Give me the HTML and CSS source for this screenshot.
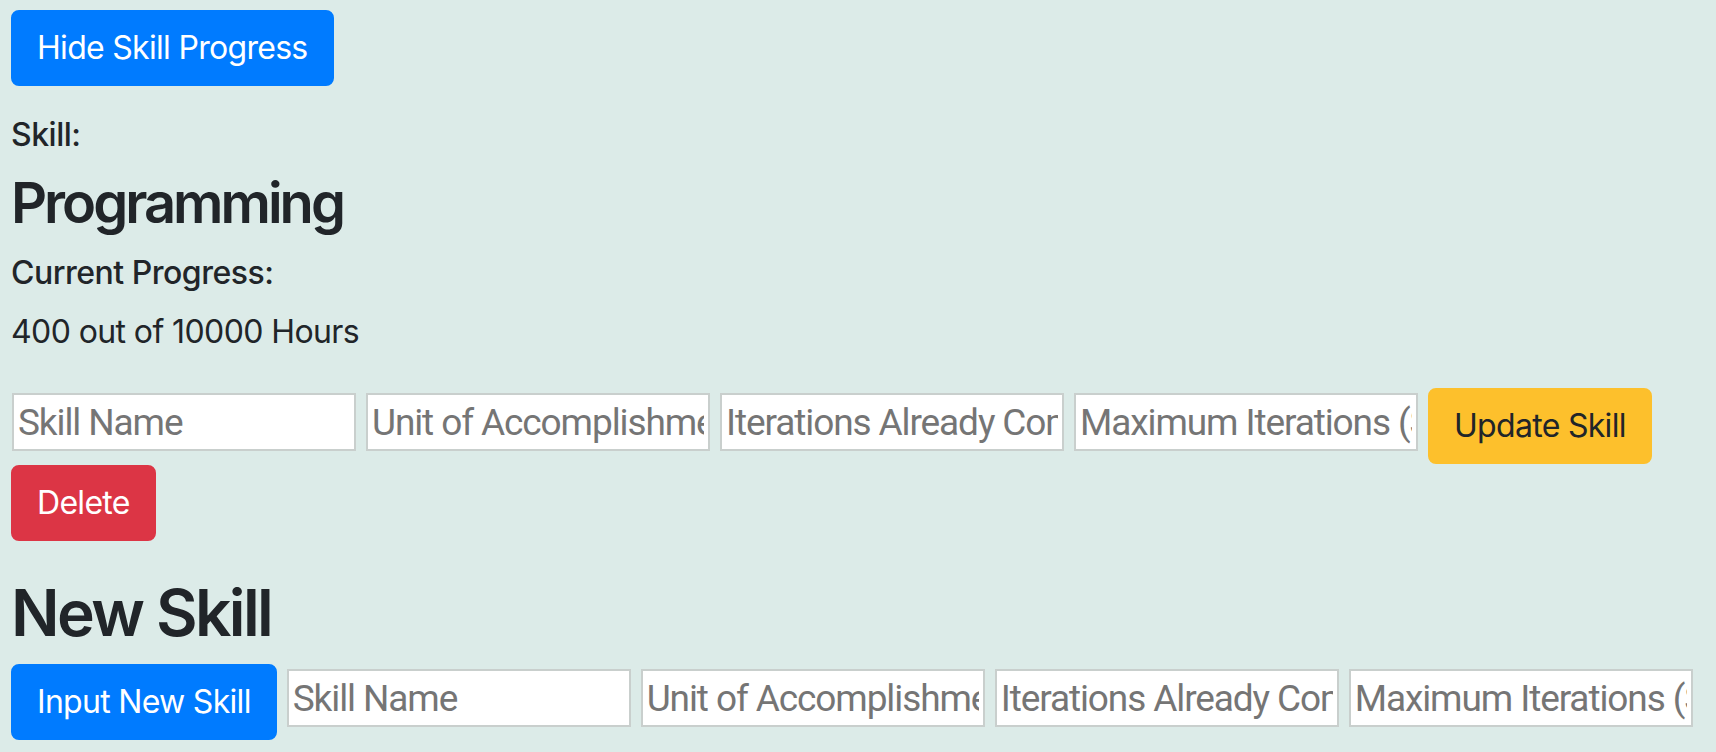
FILE: index.html
```html
<!DOCTYPE html>
<html lang="en">
<head>
<meta charset="utf-8">
<title>Skill Tracker</title>
<link rel="stylesheet" href="styles.css">
</head>
<body>
<div class="app">
  <button class="btn btn-primary hide-btn" type="button">Hide Skill Progress</button>
  <div class="skill">
    <h6 class="label">Skill:</h6>
    <h3 class="skill-name">Programming</h3>
    <h6 class="label">Current Progress:</h6>
    <p class="progress-text">400 out of 10000 Hours</p>
    <div class="form-row edit-row">
      <input class="field" type="text" placeholder="Skill Name">
      <input class="field" type="text" placeholder="Unit of Accomplishment">
      <input class="field" type="text" placeholder="Iterations Already Completed">
      <input class="field" type="text" placeholder="Maximum Iterations (Skill Goal)">
      <button class="btn btn-warning" type="button">Update Skill</button>
      <button class="btn btn-danger" type="button">Delete</button>
    </div>
  </div>
  <h2 class="section-title">New Skill</h2>
  <div class="form-row new-row">
    <button class="btn btn-primary" type="button">Input New Skill</button>
    <input class="field" type="text" placeholder="Skill Name">
    <input class="field" type="text" placeholder="Unit of Accomplishment">
    <input class="field" type="text" placeholder="Iterations Already Completed">
    <input class="field" type="text" placeholder="Maximum Iterations (Skill Goal)">
  </div>
</div>
</body>
</html>
```

FILE: styles.css
```css
html, body {
  margin: 0;
  padding: 0;
  background: #dcebe8;
}

body {
  font-family: Inter, "Noto Sans", "Liberation Sans", sans-serif;
  font-size: 32px;
  line-height: 1.5;
  letter-spacing: -0.6px;
  color: #212529;
}

.app {
  padding: 10px 11px 0 11px;
}

.btn {
  display: inline-block;
  font-family: inherit;
  font-size: 32px;
  font-weight: 400;
  letter-spacing: -0.7px;
  line-height: 48px;
  padding: 12px 24px;
  border: 2px solid transparent;
  border-radius: 8px;
  cursor: pointer;
  white-space: nowrap;
}

.btn-primary {
  background: #007bff;
  border-color: #007bff;
  color: #fff;
}

.btn-warning {
  background: #fdc02c;
  border-color: #fdc02c;
  color: #212529;
}

.btn-danger {
  background: #dc3545;
  border-color: #dc3545;
  color: #fff;
}

.hide-btn {
  display: block;
  margin-bottom: 30px;
}

.label {
  margin: 0 0 16px 0;
  font-size: 32px;
  font-weight: 500;
  letter-spacing: -0.5px;
  line-height: 1.2;
}

.skill-name {
  margin: 0 0 16px 0;
  font-size: 56px;
  font-weight: 600;
  letter-spacing: -3px;
  line-height: 1.2;
}

.progress-text {
  margin: 0 0 32px 0;
}

.form-row {
  display: flex;
  flex-wrap: wrap;
  align-items: flex-start;
  column-gap: 10px;
  row-gap: 1px;
}

.edit-row {
  margin-bottom: 34px;
}

.edit-row .field:first-child {
  margin-left: 1px;
}

.field {
  box-sizing: border-box;
  width: 344px;
  height: 58px;
  margin-top: 5px;
  padding: 3px 4px 1px 4px;
  border: 2px solid #c9cfcd;
  background: #fff;
  font-family: Roboto, Inter, "Liberation Sans", sans-serif;
  font-size: 37px;
  letter-spacing: -1.1px;
  color: #212529;
  outline: none;
}

.field::placeholder {
  color: #757575;
  opacity: 1;
}

.section-title {
  margin: 0 0 12px 0;
  font-size: 64px;
  font-weight: 600;
  letter-spacing: -2.6px;
  line-height: 1.2;
}
```
